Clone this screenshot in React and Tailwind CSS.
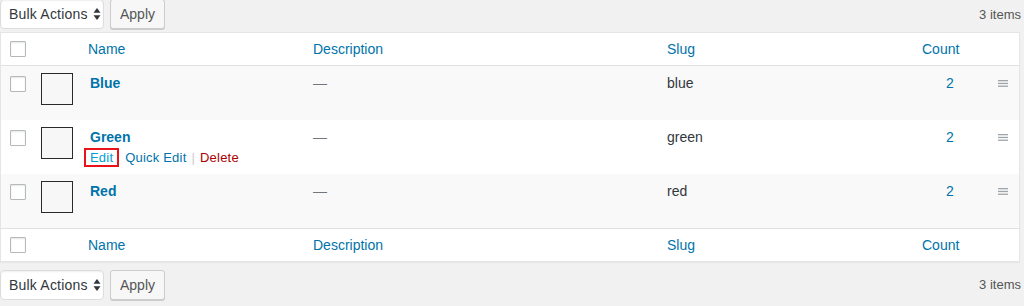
import React from 'react'

const font = "font-['Liberation_Sans',Arial,sans-serif]"
const cols = 'grid grid-cols-[34px_45px_225px_354px_241px_80px_39px]'

function Checkbox() {
  return <div className="w-4 h-4 bg-white border border-[#b4b9be] rounded-[1px] shadow-[inset_0_1px_2px_rgba(0,0,0,0.1)]" />
}

function Handle() {
  return (
    <svg width="10" height="7" viewBox="0 0 10 7" className="block">
      <rect x="0" y="0" width="10" height="1.3" fill="#a0a5aa" />
      <rect x="0" y="2.8" width="10" height="1.3" fill="#a0a5aa" />
      <rect x="0" y="5.6" width="10" height="1.3" fill="#a0a5aa" />
    </svg>
  )
}

function TableNav({ top }) {
  return (
    <div className={`flex items-center justify-between pr-[3px] ${top ? 'mt-[-1px] h-[33px] items-start' : 'mt-2'}`}>
      <div className="flex gap-[6px]">
        <div className="h-[30px] w-[104px] bg-white border border-[#ddd] rounded-[4px] shadow-[inset_0_1px_2px_rgba(0,0,0,0.07)] flex items-center pl-2 text-[14px] tracking-[0.2px] text-[#32373c]">
          <span>Bulk Actions</span>
          <svg width="8" height="12" viewBox="0 0 8 12" className="ml-[5px]">
            <path d="M4 0 L7.5 4.8 L0.5 4.8 Z" fill="#32373c" />
            <path d="M0.5 7.2 L7.5 7.2 L4 12 Z" fill="#32373c" />
          </svg>
        </div>
        <div className="h-[30px] w-[55px] bg-[#f7f7f7] border border-[#ccc] rounded-[3px] shadow-[0_1px_0_#ccc] flex items-center justify-center text-[14px] text-[#555]">
          Apply
        </div>
      </div>
      <div className={`text-[13px] text-[#555] ${top ? 'mt-[6px]' : ''}`}>3 items</div>
    </div>
  )
}

function HeadRow({ footer }) {
  return (
    <div className={`${cols} h-[33px] items-center bg-white text-[14px] text-[#0073aa] ${footer ? 'border-t border-[#e1e1e1]' : 'border-b border-[#e1e1e1]'}`}>
      <div className="pl-[9px]"><Checkbox /></div>
      <div />
      <div className="pl-2">Name</div>
      <div className="pl-2">Description</div>
      <div className="pl-2">Slug</div>
      <div className="pl-[22px]">Count</div>
      <div />
    </div>
  )
}

function Row({ name, slug, bg, actions }) {
  return (
    <div className={`${cols} h-[54px] items-start ${bg} text-[14px]`}>
      <div className="pl-[9px] pt-[10px]"><Checkbox /></div>
      <div className="pl-[6px] pt-[7px]">
        <div className="w-[32px] h-[32px] border border-[#2a2a2a] bg-[#f7f7f7]" />
      </div>
      <div className="pt-[7px]">
        <div className="pl-[10px] leading-5 font-bold text-[#0073aa]">{name}</div>
        {actions && (
          <div className="flex items-center pl-1 mt-[1px] text-[13px] tracking-[0.2px]">
            <span className="h-[19px] border-2 border-[#e8141a] px-[4px] flex items-center text-[#00a0d2]">Edit</span>
            <span className="ml-[6px] text-[#0073aa]">Quick Edit</span>
            <span className="mx-[5px] text-[#ccc]">|</span>
            <span className="text-[#a00]">Delete</span>
          </div>
        )}
      </div>
      <div className="pl-2 pt-[7px] leading-5 text-[#72777c]">—</div>
      <div className="pl-2 pt-[7px] leading-5 text-[#32373c]">{slug}</div>
      <div className="pl-[46px] pt-[7px] leading-5 text-[#0073aa]">2</div>
      <div className="pl-[18px] pt-[14px]"><Handle /></div>
    </div>
  )
}

export default function App() {
  return (
    <div className={`w-[1024px] h-[306px] overflow-hidden bg-[#f1f1f1] ${font}`}>
      <TableNav top />
      <div className="w-[1020px] border border-[#e5e5e5] shadow-[0_1px_1px_rgba(0,0,0,0.04)]">
        <HeadRow />
        <Row name="Blue" slug="blue" bg="bg-[#f9f9f9]" />
        <Row name="Green" slug="green" bg="bg-white" actions />
        <Row name="Red" slug="red" bg="bg-[#f9f9f9]" />
        <HeadRow footer />
      </div>
      <TableNav />
    </div>
  )
}
